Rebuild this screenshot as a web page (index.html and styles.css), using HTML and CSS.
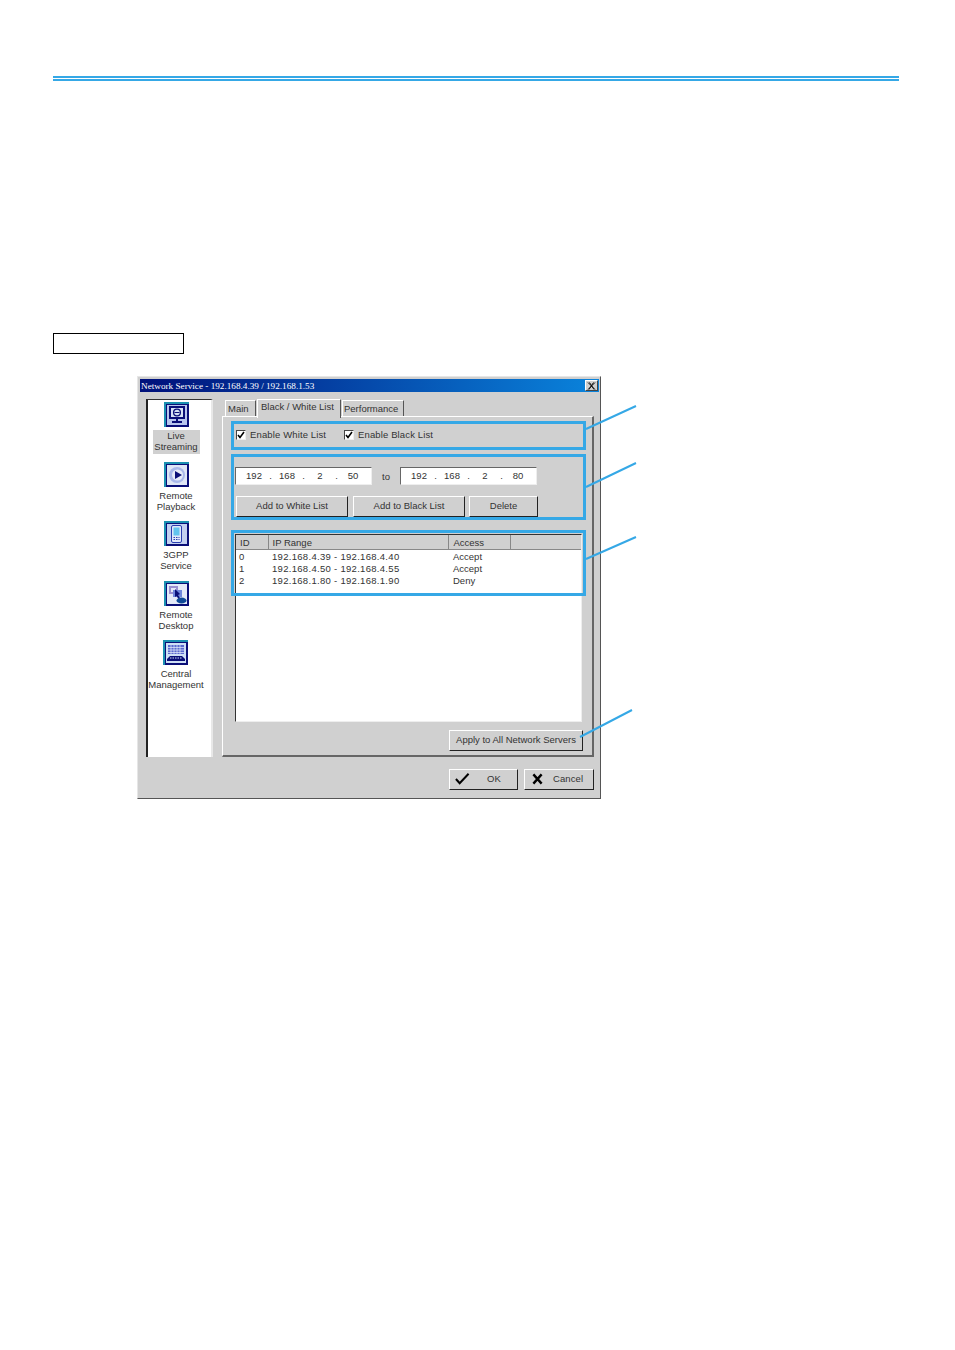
FILE: index.html
```html
<!DOCTYPE html>
<html lang="en">
<head>
<meta charset="utf-8">
<title>Network Service</title>
<link rel="stylesheet" href="styles.css">
</head>
<body>
<div class="page">
  <div class="rule"></div>
  <div class="caption-box"></div>
  <div class="dialog">
    <div class="titlebar">
      <span class="title">Network Service - 192.168.4.39 / 192.168.1.53</span>
      <span class="close"><svg width="9" height="8" viewBox="0 0 9 8"><path d="M1 0.5L8 7.5M2.5 0.5L7 7.5M8 0.5L1 7.5M6.5 0.5L2 7.5" stroke="#111" stroke-width="1" fill="none"/></svg></span>
    </div>
    <div class="body">
      <nav class="sidebar">
        <div class="nav-item">
          <svg class="nav-icon" viewBox="0 0 25 25"><rect width="25" height="25" fill="#1b8fb0"/><rect x="2" y="2" width="23" height="23" fill="#0a0f78"/><rect x="3" y="3" width="20" height="20" fill="#b9c6ee"/><rect x="5" y="4" width="16" height="13" fill="#0a0f78"/><rect x="7" y="6" width="12" height="9" fill="#d7e2f5"/><circle cx="13" cy="10.500" r="3.400" fill="none" stroke="#0a0f78" stroke-width="1.300"/><path d="M10.500 10.500H15.500" stroke="#0a0f78"/><path d="M12 17H14V19H18V21H8V19H12Z" fill="#0a0f78"/></svg>
          <div class="nav-label selected">Live<br>Streaming</div>
        </div>
        <div class="nav-item">
          <svg class="nav-icon" viewBox="0 0 25 25"><rect width="25" height="25" fill="#1b8fb0"/><rect x="2" y="2" width="23" height="23" fill="#0a0f78"/><rect x="3" y="3" width="20" height="20" fill="#dfe6f6"/><circle cx="13" cy="13" r="8" fill="#a9b8ea"/><circle cx="13.500" cy="13" r="5.500" fill="#e6ecf9"/><path d="M11 9L18 13L11 17Z" fill="#0a0f78"/></svg>
          <div class="nav-label">Remote<br>Playback</div>
        </div>
        <div class="nav-item">
          <svg class="nav-icon" viewBox="0 0 25 25"><rect width="25" height="25" fill="#1b8fb0"/><rect x="2" y="2" width="23" height="23" fill="#0a0f78"/><rect x="3" y="3" width="20" height="20" fill="#c3d0f0"/><rect x="7.500" y="4.500" width="10" height="17" rx="1.500" fill="#dfe8fa" stroke="#2a3fb0"/><rect x="9.500" y="6.500" width="6" height="8" fill="#62c4ee"/><path d="M9.500 16.500H15.500M9.500 18.500H15.500" stroke="#2a3fb0" stroke-dasharray="1.500 1"/></svg>
          <div class="nav-label">3GPP<br>Service</div>
        </div>
        <div class="nav-item">
          <svg class="nav-icon" viewBox="0 0 25 25"><rect width="25" height="25" fill="#1b8fb0"/><rect x="2" y="2" width="23" height="23" fill="#0a0f78"/><rect x="3" y="3" width="20" height="20" fill="#e4eaf8"/><rect x="5" y="5" width="9" height="8" fill="#9a8fd0"/><rect x="7" y="7" width="5" height="4" fill="#e4eaf8"/><rect x="9" y="9" width="9" height="7" fill="#6f86dc"/><path d="M11 8L16 13L14 14L16 17L14.500 18L12.500 15L11 16Z" fill="#0a0f78"/><ellipse cx="17.500" cy="19.500" rx="5" ry="3" fill="#104a98"/></svg>
          <div class="nav-label">Remote<br>Desktop</div>
        </div>
        <div class="nav-item">
          <svg class="nav-icon" viewBox="0 0 25 25"><rect width="25" height="25" fill="#1b8fb0"/><rect x="2" y="2" width="23" height="23" fill="#0a0f78"/><rect x="3" y="3" width="20" height="20" fill="#cfe0f6"/><rect x="5" y="5" width="16" height="9" fill="#5a6ad0"/><path d="M5 7.500H21M5 10H21M5 12.500H21M8 5V14M11 5V14M14 5V14M17 5V14" stroke="#e6eefa" stroke-width="0.700"/><path d="M4 19L7 16H19L22 19V21H4Z" fill="#0a0f78"/><path d="M7 18H19" stroke="#cfe0f6" stroke-dasharray="1.500 1"/></svg>
          <div class="nav-label">Central<br>Management</div>
        </div>
      </nav>
      <div class="main">
        <div class="tabs">
          <div class="tab">Main</div>
          <div class="tab active">Black / White List</div>
          <div class="tab last">Performance</div>
        </div>
        <div class="panel">
          <div class="checks">
            <label class="check"><span class="box"><svg width="8" height="8" viewBox="0 0 8 8"><path d="M1 4L3 6.500L7 1" stroke="#000" stroke-width="1.600" fill="none"/></svg></span><span class="check-text">Enable White List</span></label>
            <label class="check"><span class="box"><svg width="8" height="8" viewBox="0 0 8 8"><path d="M1 4L3 6.500L7 1" stroke="#000" stroke-width="1.600" fill="none"/></svg></span><span class="check-text">Enable Black List</span></label>
          </div>
          <div class="ip-row">
            <div class="ip"><span class="oct">192</span><span class="dot">.</span><span class="oct">168</span><span class="dot">.</span><span class="oct">2</span><span class="dot">.</span><span class="oct">50</span></div>
            <span class="to">to</span>
            <div class="ip"><span class="oct">192</span><span class="dot">.</span><span class="oct">168</span><span class="dot">.</span><span class="oct">2</span><span class="dot">.</span><span class="oct">80</span></div>
          </div>
          <div class="btn-row">
            <button class="btn wide">Add to White List</button>
            <button class="btn wide">Add to Black List</button>
            <button class="btn del">Delete</button>
          </div>
          <div class="list">
            <table class="grid">
              <thead>
                <tr><th class="c-id">ID</th><th class="c-ip">IP Range</th><th class="c-acc">Access</th><th class="c-rest"></th></tr>
              </thead>
              <tbody>
                <tr><td>0</td><td>192.168.4.39 - 192.168.4.40</td><td>Accept</td><td></td></tr>
                <tr><td>1</td><td>192.168.4.50 - 192.168.4.55</td><td>Accept</td><td></td></tr>
                <tr><td>2</td><td>192.168.1.80 - 192.168.1.90</td><td>Deny</td><td></td></tr>
              </tbody>
            </table>
          </div>
          <div class="apply-row"><button class="btn apply">Apply to All Network Servers</button></div>
        </div>
      </div>
    </div>
    <div class="footer">
      <button class="btn foot ok"><svg width="15" height="13" viewBox="0 0 16 13"><path d="M1 7L5 11.500L14.500 1.500" stroke="#000" stroke-width="2.200" fill="none"/></svg><span>OK</span></button>
      <button class="btn foot cancel"><svg width="11" height="12" viewBox="0 0 12 12"><path d="M1.500 1L10.500 11M10.500 1L1.500 11" stroke="#000" stroke-width="2.600" fill="none"/></svg><span>Cancel</span></button>
    </div>
  </div>
  <div class="hl hl-1"></div>
  <div class="hl hl-2"></div>
  <div class="hl hl-3"></div>
  <svg class="leaders" width="955" height="1350" viewBox="0 0 955 1350">
    <path d="M586 429L636 406M586 487L636 463M586 559L636 537M580 737L632 710" stroke="#35a8e6" stroke-width="2" fill="none"/>
  </svg>
</div>
</body>
</html>
```
FILE: styles.css
```css
* { box-sizing: border-box; }
html, body { margin: 0; padding: 0; background: #fff; }
.page {
  position: relative;
  width: 955px;
  height: 1350px;
  padding-top: 76px;
  overflow: hidden;
  font-family: "Liberation Sans", Arial, sans-serif;
  font-size: 9.5px;
  color: #333;
}
.rule {
  width: 846px;
  height: 5px;
  margin-left: 53px;
  border-top: 2px solid #35a8e6;
  border-bottom: 2px solid #35a8e6;
}
.caption-box {
  width: 131px;
  height: 21px;
  margin: 252px 0 0 53px;
  border: 1px solid #000;
  background: #fff;
}
.dialog {
  width: 464px;
  height: 423px;
  margin: 22px 0 0 137px;
  padding: 2px 1px 0 2px;
  background: #d0d0d0;
  border-top: 1px solid #e6e6e6;
  border-left: 1px solid #e6e6e6;
  border-right: 1px solid #555;
  border-bottom: 1px solid #555;
}
.titlebar {
  display: flex;
  align-items: center;
  justify-content: space-between;
  height: 13px;
  padding: 0 1px 0 1px;
  background: linear-gradient(to right, #00107a, #0a84dc);
  color: #fff;
}
.title { font-family: "Liberation Serif", serif; font-size: 9.2px; white-space: nowrap; }
.close {
  display: flex;
  align-items: center;
  justify-content: center;
  width: 13px;
  height: 11px;
  background: #d0d0d0;
  border: 1px solid;
  border-color: #fff #444 #444 #fff;
}
.body { display: flex; gap: 9px; margin-top: 7px; padding-left: 6px; }
.sidebar {
  width: 67px;
  height: 358px;
  padding: 2px 7px 0 0;
  background: #fff;
  border-top: 1px solid #333;
  border-left: 2px solid #222;
  border-right: 2px solid #e8e8e8;
  display: flex;
  flex-direction: column;
  align-items: center;
}
.nav-item {
  height: 59.5px;
  flex: none;
  display: flex;
  flex-direction: column;
  align-items: center;
}
.nav-icon { width: 25px; height: 25px; flex: none; }
.nav-label {
  margin-top: 3px;
  padding: 0 0 2px;
  min-width: 47px;
  line-height: 11px;
  text-align: center;
  white-space: nowrap;
}
.nav-label.selected { background: #d0d0d0; }
.main { width: 372px; display: flex; flex-direction: column; }
.tabs { display: flex; align-items: flex-end; height: 17px; padding-left: 3px; gap: 1px; }
.tab {
  height: 16px;
  padding: 2px 0 0 2px;
  width: 31px;
  background: #d0d0d0;
  border-top: 1px solid #fff;
  border-left: 1px solid #fff;
  border-right: 1px solid #555;
  white-space: nowrap;
}
.tab.active {
  position: relative;
  z-index: 1;
  width: 84px;
  height: 19px;
  margin-bottom: -2px;
  padding: 1px 0 0 3px;
}
.tab.last { width: 62px; padding-left: 1px; }
.panel {
  height: 341px;
  padding: 0 0 0 12px;
  background: #d0d0d0;
  border-top: 1px solid #fff;
  border-left: 1px solid #fff;
  border-right: 2px solid #666;
  border-bottom: 2px solid #666;
}
.checks { display: flex; height: 12px; margin: 12px 0 0 1px; align-items: center; }
.check { display: flex; align-items: center; width: 108px; white-space: nowrap; }
.check-text { padding-bottom: 2px; letter-spacing: 0.13px; }
.box {
  display: flex;
  align-items: center;
  justify-content: center;
  width: 10px;
  height: 10px;
  margin-right: 4px;
  background: #fff;
  border: 1px solid;
  border-color: #444 #eee #eee #444;
}
.ip-row { display: flex; align-items: center; margin-top: 26px; height: 18px; }
.ip {
  display: flex;
  align-items: center;
  width: 137px;
  height: 18px;
  padding: 0 0 2px 8px;
  background: #fff;
  border: 1px solid;
  border-color: #666 #eee #eee #666;
}
.oct { width: 20px; text-align: center; }
.dot { width: 13px; text-align: center; }
.to { width: 28px; text-align: center; }
.btn-row { display: flex; gap: 5px; margin: 11px 0 0 1px; }
.btn {
  display: block;
  height: 21px;
  padding: 0 0 2px;
  background: #d0d0d0;
  border: 1px solid;
  border-color: #fff #222 #222 #fff;
  border-radius: 0;
  font: inherit;
  color: inherit;
  white-space: nowrap;
}
.btn.wide { width: 112px; }
.btn.del { width: 69px; margin-left: -1px; }
.list {
  width: 347px;
  height: 188px;
  margin-top: 17px;
  background: #fff;
  border-top: 1px solid #333;
  border-left: 1px solid #333;
  border-right: 1px solid #eee;
  border-bottom: 1px solid #eee;
}
.grid { border-collapse: collapse; table-layout: fixed; width: 345px; }
.grid th {
  height: 14px;
  padding: 2px 0 0 4px;
  font-weight: normal;
  text-align: left;
  background: #d0d0d0;
  border-right: 1px solid #888;
  border-bottom: 1px solid #888;
}
.grid th.c-rest { border-right: 0; }
.c-id { width: 32px; }
.c-ip { width: 180px; }
.c-acc { width: 62px; }
.grid th.c-acc { padding-left: 5px; }
.grid td { height: 12px; padding: 0 0 0 3px; line-height: 12px; white-space: nowrap; }
.grid td:nth-child(2) { padding-left: 4px; letter-spacing: 0.3px; }
.grid td:nth-child(3) { padding-left: 5px; }
.grid tbody tr:first-child td { padding-top: 1px; height: 13px; }
.apply-row { display: flex; justify-content: flex-end; width: 348px; margin-top: 8px; }
.btn.apply { width: 134px; }
.footer { display: flex; justify-content: flex-end; gap: 6px; margin-top: 12px; padding-right: 5px; }
.btn.foot { display: flex; align-items: center; width: 69px; padding: 0 0 2px 5px; }
.btn.ok span { margin-left: 17px; }
.btn.cancel span { margin-left: 10px; letter-spacing: 0.1px; }
.btn.cancel { width: 70px; padding-left: 7px; }
.hl { position: absolute; left: 231px; width: 355px; border: 3px solid #35a8e6; }
.hl-1 { top: 421px; height: 29px; }
.hl-2 { top: 454px; height: 66px; }
.hl-3 { top: 530px; height: 66px; }
.leaders { position: absolute; left: 0; top: 0; pointer-events: none; }
```
